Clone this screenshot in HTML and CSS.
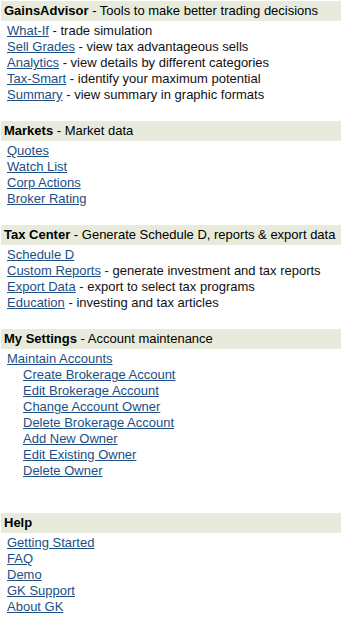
FILE: index.html
```html
<!DOCTYPE html>
<html lang="en">
  <head>
    <meta charset="UTF-8" />
    <meta name="viewport" content="width=device-width, initial-scale=1.0" />
    <title>GainsKeeper Menu</title>
    <link rel="stylesheet" href="styles.css">
  </head>

  <body>
    <div class="menu">
      <div class="section">
        <div class="head"><b>GainsAdvisor</b> - Tools to make better trading decisions</div>
        <ul class="links">
          <li><a href="#">What-If</a> - trade simulation</li>
          <li><a href="#">Sell Grades</a> - view tax advantageous sells</li>
          <li><a href="#">Analytics</a> - view details by different categories</li>
          <li><a href="#">Tax-Smart</a> - identify your maximum potential</li>
          <li><a href="#">Summary</a> - view summary in graphic formats</li>
        </ul>
      </div>

      <div class="section">
        <div class="head"><b>Markets</b> - Market data</div>
        <ul class="links">
          <li><a href="#">Quotes</a></li>
          <li><a href="#">Watch List</a></li>
          <li><a href="#">Corp Actions</a></li>
          <li><a href="#">Broker Rating</a></li>
        </ul>
      </div>

      <div class="section">
        <div class="head"><b>Tax Center</b> - Generate Schedule D, reports &amp; export data</div>
        <ul class="links">
          <li><a href="#">Schedule D</a></li>
          <li><a href="#">Custom Reports</a> - generate investment and tax reports</li>
          <li><a href="#">Export Data</a> - export to select tax programs</li>
          <li><a href="#">Education</a> - investing and tax articles</li>
        </ul>
      </div>

      <div class="section wide">
        <div class="head"><b>My Settings</b> - Account maintenance</div>
        <ul class="links">
          <li><a href="#">Maintain Accounts</a></li>
          <li class="sub"><a href="#">Create Brokerage Account</a></li>
          <li class="sub"><a href="#">Edit Brokerage Account</a></li>
          <li class="sub"><a href="#">Change Account Owner</a></li>
          <li class="sub"><a href="#">Delete Brokerage Account</a></li>
          <li class="sub"><a href="#">Add New Owner</a></li>
          <li class="sub"><a href="#">Edit Existing Owner</a></li>
          <li class="sub"><a href="#">Delete Owner</a></li>
        </ul>
      </div>

      <div class="section">
        <div class="head"><b>Help</b></div>
        <ul class="links">
          <li><a href="#">Getting Started</a></li>
          <li><a href="#">FAQ</a></li>
          <li><a href="#">Demo</a></li>
          <li><a href="#">GK Support</a></li>
          <li><a href="#">About GK</a></li>
        </ul>
      </div>
    </div>
  </body>
</html>
```

FILE: styles.css
```css
body {
  margin: 0;
  background-color: #fff;
  font-family: "Liberation Sans", Arial, sans-serif;
  font-size: 13px;
  color: #111;
}

.menu {
  width: 340px;
  padding: 1px 1px 0;
}

.section {
  margin-bottom: 18px;
}

.section.wide {
  margin-bottom: 34px;
}

.head {
  height: 20px;
  line-height: 20px;
  padding-left: 3px;
  background-color: #e8ebdb;
  color: #000;
  white-space: nowrap;
}

.links {
  list-style: none;
  margin: 0;
  padding: 2px 0 0 6px;
}

.links li {
  height: 16px;
  line-height: 16px;
  white-space: nowrap;
}

.links li.sub {
  padding-left: 16px;
}

a {
  color: #1b4f86;
  text-decoration: underline;
}
```
